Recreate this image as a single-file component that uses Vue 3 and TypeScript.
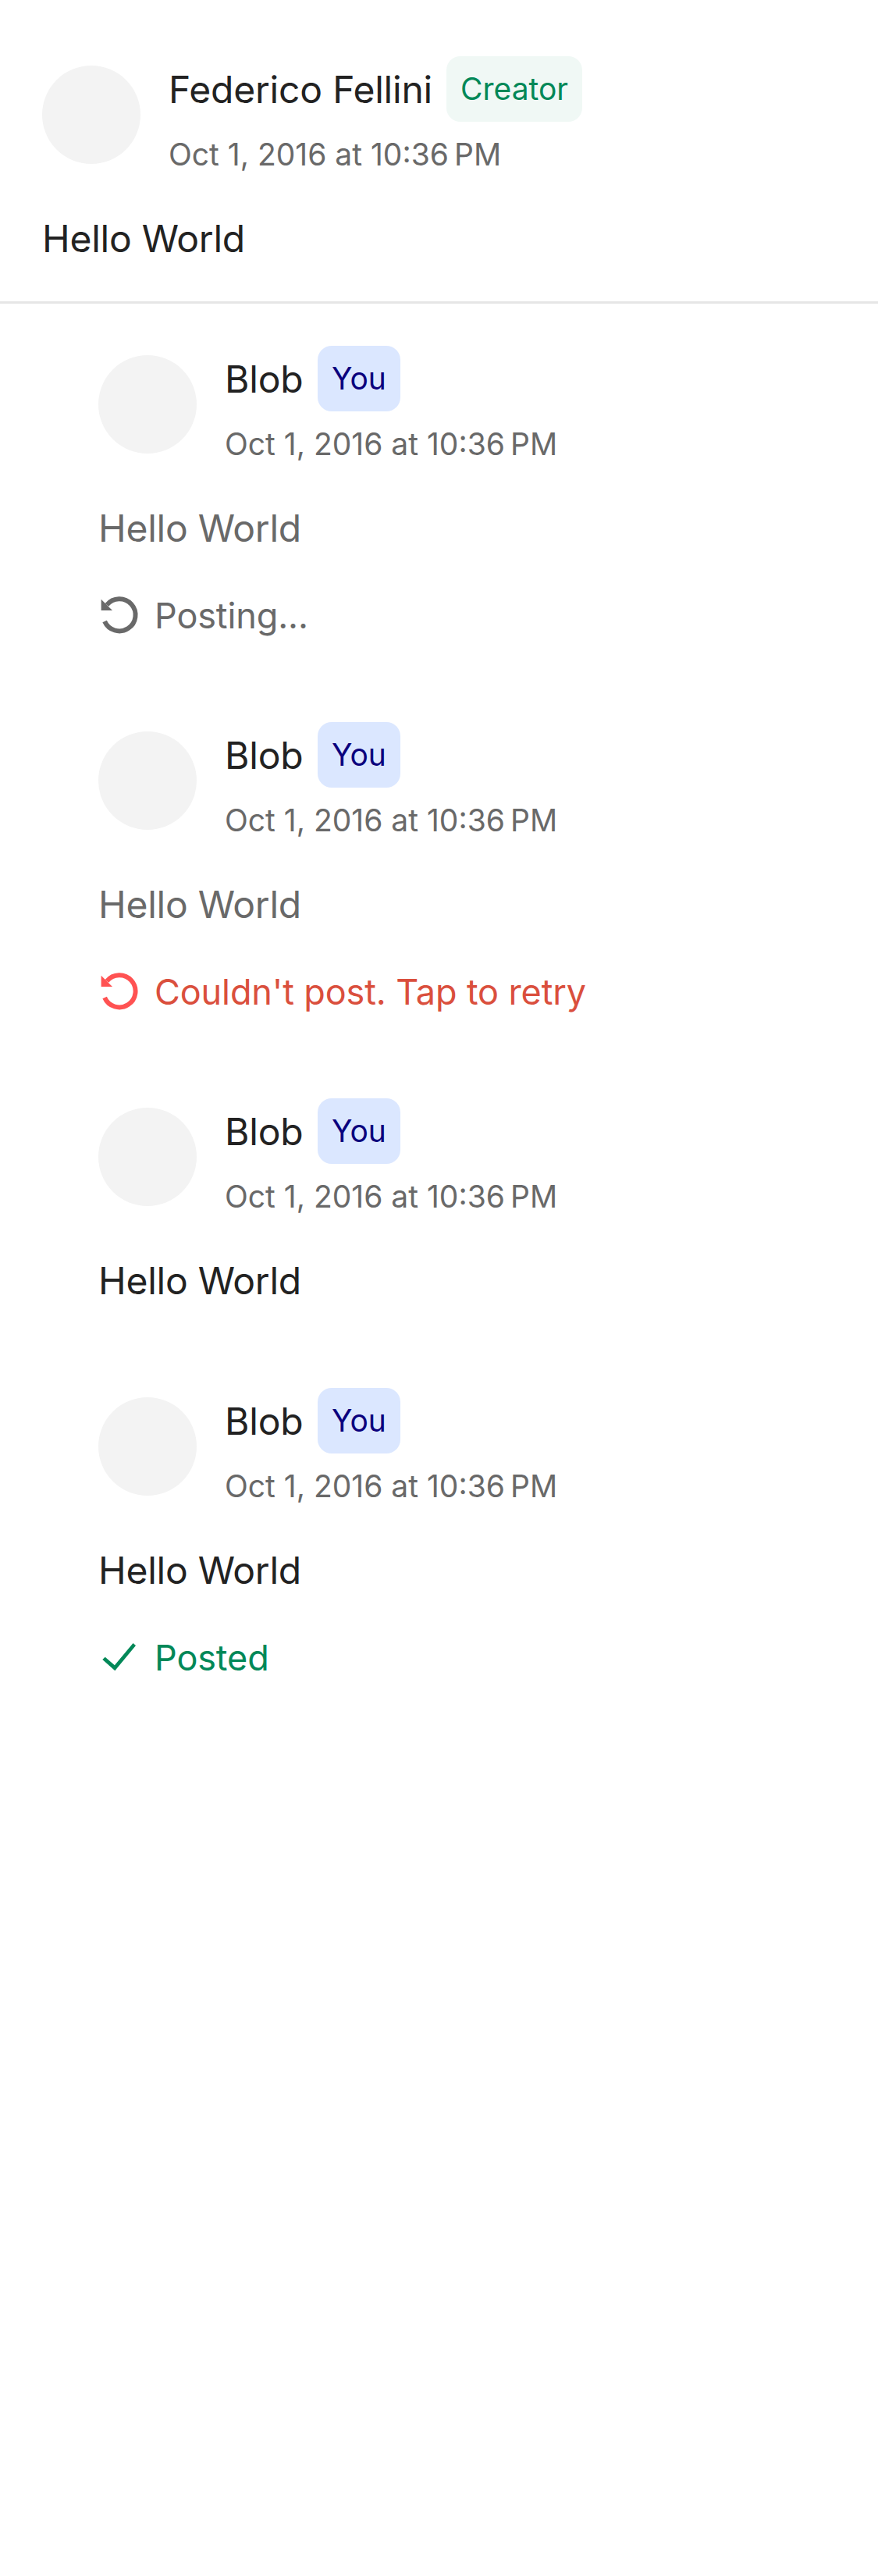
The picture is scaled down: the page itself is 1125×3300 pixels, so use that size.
<script setup lang="ts">
type Status = 'posting' | 'failed' | 'posted' | null

interface Comment {
  id: number
  author: string
  badge: 'Creator' | 'You'
  date: string
  body: string
  muted: boolean
  status: Status
}

const date = 'Oct 1, 2016 at 10:36\u202fPM'

const comments: Comment[] = [
  { id: 1, author: 'Federico Fellini', badge: 'Creator', date, body: 'Hello World', muted: false, status: null },
  { id: 2, author: 'Blob', badge: 'You', date, body: 'Hello World', muted: true, status: 'posting' },
  { id: 3, author: 'Blob', badge: 'You', date, body: 'Hello World', muted: true, status: 'failed' },
  { id: 4, author: 'Blob', badge: 'You', date, body: 'Hello World', muted: false, status: null },
  { id: 5, author: 'Blob', badge: 'You', date, body: 'Hello World', muted: false, status: 'posted' },
]

const statusText = {
  posting: 'Posting...',
  failed: "Couldn't post. Tap to retry",
  posted: 'Posted',
}
</script>

<template>
  <main class="thread">
    <article
      v-for="(comment, index) in comments"
      :key="comment.id"
      class="comment"
      :class="index === 0 ? 'root' : 'reply'"
    >
      <header class="header">
        <div class="avatar"></div>
        <div class="meta">
          <div class="author-row">
            <span class="author">{{ comment.author }}</span>
            <span class="badge" :class="comment.badge.toLowerCase()">{{ comment.badge }}</span>
          </div>
          <time class="date">{{ comment.date }}</time>
        </div>
      </header>
      <p class="body" :class="{ muted: comment.muted }">{{ comment.body }}</p>
      <div v-if="comment.status" class="status" :class="comment.status">
        <svg class="icon" viewBox="0 0 54 57" aria-hidden="true">
          <path
            v-if="comment.status === 'posted'"
            d="M5.3 31 8.7 27.7 20.9 38.3 44.5 10 48 13 21.3 45.3Z"
            fill="currentColor"
          />
          <g v-else>
            <path
              d="M10.9 14.9A20.6 20.6 0 1 1 8.1 36.05"
              fill="none"
              stroke="currentColor"
              stroke-width="5.9"
            />
            <path d="M3.6 7.7V21.9H18Z" fill="currentColor" />
          </g>
        </svg>
        <span>{{ statusText[comment.status] }}</span>
      </div>
    </article>
  </main>
</template>

<style>
body {
  background: #fff;
}
</style>

<style scoped>
.thread {
  min-height: 3300px;
  background: #fff;
  color: #222;
  font-family: Inter, 'Liberation Sans', sans-serif;
  font-weight: 400;
}

.comment {
  padding: 54px 54px 54px 126px;
}

.root {
  box-sizing: border-box;
  height: 389px;
  padding: 72px 54px 0;
  border-bottom: 3px solid #e6e6e6;
}

.header {
  display: flex;
  gap: 36px;
}

.avatar {
  flex: none;
  width: 126px;
  height: 126px;
  margin-top: 12px;
  border-radius: 50%;
  background: #f3f3f3;
}

.author-row {
  display: flex;
  align-items: center;
  gap: 18px;
  height: 84px;
}

.author {
  min-width: 101px;
  padding-top: 2px;
  font-size: 48px;
  line-height: 60px;
  letter-spacing: -0.2px;
}

.badge {
  padding: 18px;
  border-radius: 18px;
  font-size: 39px;
  line-height: 48px;
}

.creator {
  background: #f0f8f5;
  color: #028858;
}

.you {
  background: #dbe7ff;
  color: #0a007d;
}

.date {
  display: block;
  margin-top: 18px;
  font-size: 39px;
  line-height: 47px;
  color: #696969;
}

.body {
  margin: 55px 0 0;
  font-size: 48px;
  line-height: 59px;
  letter-spacing: -0.25px;
}

.muted {
  color: #696969;
}

.status {
  display: flex;
  gap: 18px;
  height: 57px;
  margin-top: 54px;
  font-size: 45px;
  line-height: 57px;
  letter-spacing: -0.12px;
}

.icon {
  flex: none;
  width: 54px;
  height: 57px;
}

.posting {
  color: #696969;
}

.failed {
  color: #da4f3d;
}

.failed .icon {
  color: #ff5252;
}

.posted {
  color: #028858;
}
</style>
